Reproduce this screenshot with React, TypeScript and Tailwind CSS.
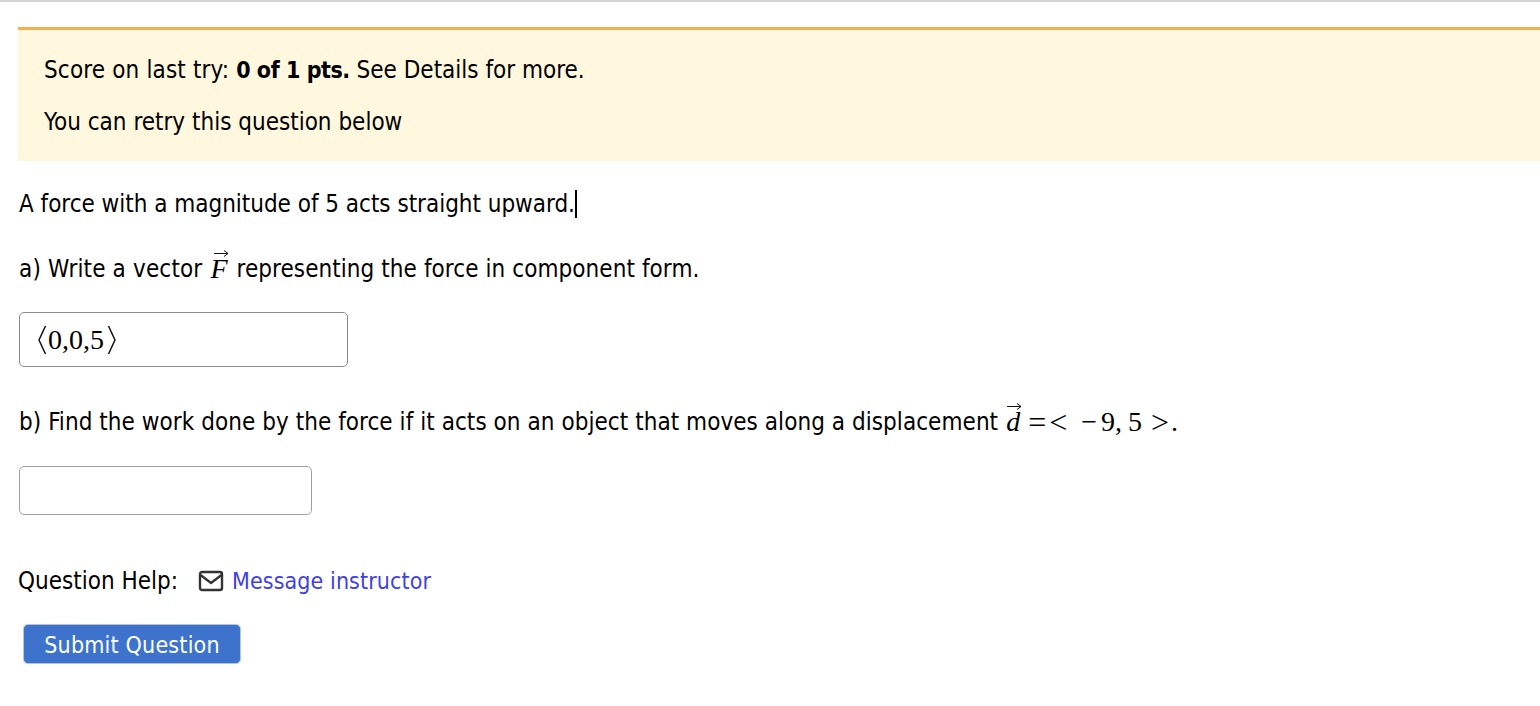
import React from "react";

const Arrow = ({ w, className }: { w: number; className: string }) => (
  <svg width={w} height="9" viewBox={`0 0 ${w} 9`} className={className} fill="none" stroke="#111" strokeWidth="1">
    <path d={`M0 4.5H${w - 1}M${w - 5} 1.5L${w - 1} 4.5L${w - 5} 7.5`} />
  </svg>
);

export default function App() {
  return (
    <div className="min-h-[706px] bg-white text-black font-['DejaVu_Sans_Condensed','Noto_Sans',sans-serif] text-[24px] leading-[30px] overflow-hidden">
      <div className="h-[2px] bg-[#d4d4d4]" />
      <div className="pt-[25px] pl-[18px]">
        <div className="h-[134px] border-t-[3px] border-[#f4b04f] bg-[#fff7de] pl-[26px] pt-[25px]">
          <p className="h-[52px]">
            <span className="tracking-[0.15px]">Score on last try: </span>
            <b className="text-[23px] tracking-[-0.45px]">0 of 1 pts.</b> See Details for more.
          </p>
          <p>You can retry this question below</p>
        </div>
      </div>
      <div className="pl-[19px]">
        <p className="mt-[27px] flex h-[30px] items-center pt-[1px] tracking-[-0.02px]">
          A force with a magnitude of 5 acts straight upward.
          <span className="h-[28px] w-[2px] bg-black" />
        </p>
        <p className="mt-[35px] flex h-[30px] items-center whitespace-pre pt-[1px]">
          <span className="tracking-[0.15px]">a) Write a vector</span>
          <span className="relative ml-[8px] mr-[9px] font-['Liberation_Serif',serif] text-[28px] italic">
            F
            <Arrow w={15} className="absolute left-[4px] top-[-5px]" />
          </span>
          <span className="tracking-[0.07px]">representing the force in component form.</span>
        </p>
        <div className="mt-[29px] flex h-[55px] w-[329px] items-center rounded-[5px] border border-[#8a8a8a] pl-[17px] font-['Liberation_Serif',serif] text-[28px]">
          <span className="flex items-center">
            <svg width="10" height="30" viewBox="0 0 10 30" fill="none" stroke="#111" strokeWidth="1.5" className="mr-[1px]">
              <path d="M8.5 1L2 15L8.5 29" />
            </svg>
            <span>0,0,5</span>
            <svg width="10" height="30" viewBox="0 0 10 30" fill="none" stroke="#111" strokeWidth="1.5" className="ml-[3px]">
              <path d="M1.5 1L8 15L1.5 29" />
            </svg>
          </span>
        </div>
        <p className="mt-[40px] flex h-[30px] items-center whitespace-pre">
          <span className="tracking-[0.05px]">b) Find the work done by the force if it acts on an object that moves along a displacement</span>
          <span className="flex items-center font-['Liberation_Serif',serif] text-[28px]">
            <span className="relative ml-[8px] italic">
              d
              <Arrow w={15} className="absolute left-[1px] top-[-5px]" />
            </span>
            <span className="ml-[8px] text-[32px]">=</span>
            <span className="ml-[3px] text-[32px]">&lt;</span>
            <span className="ml-[14px]">−</span>
            <span className="ml-[4px]">9,</span>
            <span className="ml-[6px]">5</span>
            <span className="ml-[9px] text-[32px]">&gt;</span>
            <span className="ml-[2px]">.</span>
          </span>
        </p>
        <div className="mt-[29px] h-[49px] w-[293px] rounded-[5px] border border-[#a0a0a0]" />
      </div>
      <div className="mt-[51px] flex h-[30px] items-center pl-[18px]">
        <span>Question Help:</span>
        <svg width="26" height="22" viewBox="0 0 26 22" fill="none" stroke="#333" strokeWidth="2.4" className="ml-[20px]">
          <rect x="2" y="2" width="22" height="18" rx="2" />
          <path d="M2.5 5L13 13L23.5 5" />
        </svg>
        <a className="ml-[8px] text-[23px] tracking-[0.1px] text-[#4040e8]">Message instructor</a>
      </div>
      <div className="mt-[28px] pl-[23px]">
        <button className="flex h-[40px] w-[218px] items-center justify-center rounded-[5px] border border-[#b8c4d8] bg-[#3d73cd] pt-[1px] text-[23px] tracking-[0.2px] text-white">
          Submit Question
        </button>
      </div>
    </div>
  );
}
